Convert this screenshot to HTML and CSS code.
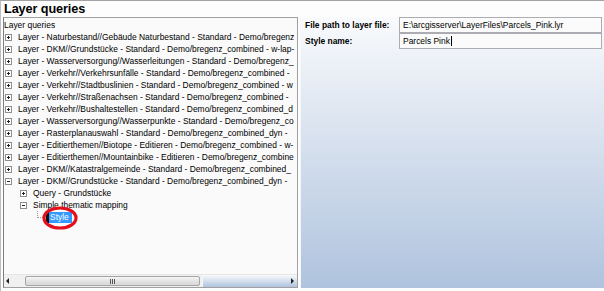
FILE: index.html
```html
<!DOCTYPE html>
<html>
<head>
<meta charset="utf-8">
<link rel="stylesheet" href="styles.css">
</head>
<body>
<div class="app">
  <div class="header">Layer queries</div>
  <div class="main">
    <div class="tree">
      <div class="tree-body">
        <div class="row root">Layer queries</div>
        <div class="row l1"><span class="exp"><svg width="7" height="7" viewBox="0 0 7 7"><rect x="0.5" y="0.5" width="6" height="6" fill="#fff" stroke="#8e8f8f"/><path d="M2 3.5h3M3.5 2v3" stroke="#222" stroke-width="1"/></svg></span><span class="txt">Layer - Naturbestand//Gebäude Naturbestand - Standard - Demo/bregenz</span></div>
        <div class="row l1"><span class="exp"><svg width="7" height="7" viewBox="0 0 7 7"><rect x="0.5" y="0.5" width="6" height="6" fill="#fff" stroke="#8e8f8f"/><path d="M2 3.5h3M3.5 2v3" stroke="#222" stroke-width="1"/></svg></span><span class="txt">Layer - DKM//Grundstücke - Standard - Demo/bregenz_combined - w-lap-</span></div>
        <div class="row l1"><span class="exp"><svg width="7" height="7" viewBox="0 0 7 7"><rect x="0.5" y="0.5" width="6" height="6" fill="#fff" stroke="#8e8f8f"/><path d="M2 3.5h3M3.5 2v3" stroke="#222" stroke-width="1"/></svg></span><span class="txt">Layer - Wasserversorgung//Wasserleitungen - Standard - Demo/bregenz_</span></div>
        <div class="row l1"><span class="exp"><svg width="7" height="7" viewBox="0 0 7 7"><rect x="0.5" y="0.5" width="6" height="6" fill="#fff" stroke="#8e8f8f"/><path d="M2 3.5h3M3.5 2v3" stroke="#222" stroke-width="1"/></svg></span><span class="txt">Layer - Verkehr//Verkehrsunfälle - Standard - Demo/bregenz_combined -</span></div>
        <div class="row l1"><span class="exp"><svg width="7" height="7" viewBox="0 0 7 7"><rect x="0.5" y="0.5" width="6" height="6" fill="#fff" stroke="#8e8f8f"/><path d="M2 3.5h3M3.5 2v3" stroke="#222" stroke-width="1"/></svg></span><span class="txt">Layer - Verkehr//Stadtbuslinien - Standard - Demo/bregenz_combined - w</span></div>
        <div class="row l1"><span class="exp"><svg width="7" height="7" viewBox="0 0 7 7"><rect x="0.5" y="0.5" width="6" height="6" fill="#fff" stroke="#8e8f8f"/><path d="M2 3.5h3M3.5 2v3" stroke="#222" stroke-width="1"/></svg></span><span class="txt">Layer - Verkehr//Straßenachsen - Standard - Demo/bregenz_combined -</span></div>
        <div class="row l1"><span class="exp"><svg width="7" height="7" viewBox="0 0 7 7"><rect x="0.5" y="0.5" width="6" height="6" fill="#fff" stroke="#8e8f8f"/><path d="M2 3.5h3M3.5 2v3" stroke="#222" stroke-width="1"/></svg></span><span class="txt">Layer - Verkehr//Bushaltestellen - Standard - Demo/bregenz_combined_d</span></div>
        <div class="row l1"><span class="exp"><svg width="7" height="7" viewBox="0 0 7 7"><rect x="0.5" y="0.5" width="6" height="6" fill="#fff" stroke="#8e8f8f"/><path d="M2 3.5h3M3.5 2v3" stroke="#222" stroke-width="1"/></svg></span><span class="txt">Layer - Wasserversorgung//Wasserpunkte - Standard - Demo/bregenz_co</span></div>
        <div class="row l1"><span class="exp"><svg width="7" height="7" viewBox="0 0 7 7"><rect x="0.5" y="0.5" width="6" height="6" fill="#fff" stroke="#8e8f8f"/><path d="M2 3.5h3M3.5 2v3" stroke="#222" stroke-width="1"/></svg></span><span class="txt">Layer - Rasterplanauswahl - Standard - Demo/bregenz_combined_dyn -</span></div>
        <div class="row l1"><span class="exp"><svg width="7" height="7" viewBox="0 0 7 7"><rect x="0.5" y="0.5" width="6" height="6" fill="#fff" stroke="#8e8f8f"/><path d="M2 3.5h3M3.5 2v3" stroke="#222" stroke-width="1"/></svg></span><span class="txt">Layer - Editierthemen//Biotope - Editieren - Demo/bregenz_combined - w-</span></div>
        <div class="row l1"><span class="exp"><svg width="7" height="7" viewBox="0 0 7 7"><rect x="0.5" y="0.5" width="6" height="6" fill="#fff" stroke="#8e8f8f"/><path d="M2 3.5h3M3.5 2v3" stroke="#222" stroke-width="1"/></svg></span><span class="txt">Layer - Editierthemen//Mountainbike - Editieren - Demo/bregenz_combine</span></div>
        <div class="row l1"><span class="exp"><svg width="7" height="7" viewBox="0 0 7 7"><rect x="0.5" y="0.5" width="6" height="6" fill="#fff" stroke="#8e8f8f"/><path d="M2 3.5h3M3.5 2v3" stroke="#222" stroke-width="1"/></svg></span><span class="txt">Layer - DKM//Katastralgemeinde - Standard - Demo/bregenz_combined_</span></div>
        <div class="row l1"><span class="exp"><svg width="7" height="7" viewBox="0 0 7 7"><rect x="0.5" y="0.5" width="6" height="6" fill="#fff" stroke="#8e8f8f"/><path d="M2 3.5h3" stroke="#222" stroke-width="1"/></svg></span><span class="txt">Layer - DKM//Grundstücke - Standard - Demo/bregenz_combined_dyn -</span></div>
        <div class="row l2"><span class="exp"><svg width="7" height="7" viewBox="0 0 7 7"><rect x="0.5" y="0.5" width="6" height="6" fill="#fff" stroke="#8e8f8f"/><path d="M2 3.5h3M3.5 2v3" stroke="#222" stroke-width="1"/></svg></span><span class="txt">Query - Grundstücke</span></div>
        <div class="row l2"><span class="exp"><svg width="7" height="7" viewBox="0 0 7 7"><rect x="0.5" y="0.5" width="6" height="6" fill="#fff" stroke="#8e8f8f"/><path d="M2 3.5h3" stroke="#222" stroke-width="1"/></svg></span><span class="txt">Simple thematic mapping</span></div>
        <div class="row l3"><span class="conn"></span><span class="sel">Style</span></div>
      </div>
      <div class="hscroll">
        <div class="sb-btn left"><span class="arr-l"></span></div>
        <div class="track">
          <div class="thumb"><span class="grip"></span><span class="grip"></span><span class="grip"></span></div>
        </div>
        <div class="sb-btn right"><span class="arr-r"></span></div>
      </div>
    </div>
    <div class="right">
      <div class="form">
        <div class="label">File path to layer file:</div>
        <div class="box">E:\arcgisserver\LayerFiles\Parcels_Pink.lyr</div>
        <div class="label">Style name:</div>
        <div class="box">Parcels Pink<span class="caret"></span></div>
      </div>
    </div>
  </div>
  <svg class="mark" width="40" height="26" viewBox="0 0 40 26"><ellipse cx="19" cy="13" rx="16" ry="10" fill="none" stroke="#e3101c" stroke-width="3.2"/></svg>
</div>
</body>
</html>
```

FILE: styles.css
```css
html, body {
  margin: 0;
  padding: 0;
  background: #ffffff;
}
.app {
  position: relative;
  width: 604px;
  height: 291px;
  box-sizing: border-box;
  border-top: 1px solid #a3a3a3;
  border-left: 1px solid #bdbdbd;
  background: #fdfdfd;
  overflow: hidden;
  font-family: "Liberation Sans", Arial, sans-serif;
  color: #000;
}
.header {
  height: 16px;
  line-height: 16px;
  padding-left: 3px;
  font-size: 12.7px;
  font-weight: bold;
  letter-spacing: -0.1px;
}
.main {
  display: flex;
  height: 271px;
  padding-left: 2px;
}
.tree {
  width: 295px;
  box-sizing: border-box;
  border: 1px solid #a0a0a0;
  border-left-color: #7d7d7d;
  background: #fafafa;
  display: flex;
  flex-direction: column;
}
.tree-body {
  flex: 1;
  overflow: hidden;
  font-size: 8.45px;
  padding-top: 1px;
}
.row {
  height: 12px;
  line-height: 12px;
  display: flex;
  align-items: center;
  white-space: nowrap;
  overflow: hidden;
}
.root { padding-left: 0; }
.l1 { padding-left: 1px; }
.l2 { padding-left: 16px; }
.l3 { padding-left: 33px; }
.exp {
  width: 7px;
  height: 7px;
  margin-right: 6px;
  flex: none;
  display: flex;
}
.txt { flex: none; }
.conn {
  width: 5px;
  height: 6px;
  margin-top: -6px;
  margin-right: 3px;
  border-left: 1px dotted #999;
  border-bottom: 1px dotted #999;
  flex: none;
}
.sel {
  background: #3399ff;
  color: #fff;
  border-left: 3px solid #111;
  padding: 0 3px 0 1px;
  line-height: 11px;
  height: 11px;
}
.hscroll {
  height: 12px;
  display: flex;
  background: #f0f0f0;
  border-top: 1px solid #e6e6e6;
}
.sb-btn {
  width: 20px;
  display: flex;
  align-items: center;
}
.sb-btn.left { justify-content: flex-start; padding-left: 2px; width: 19px; }
.sb-btn.right { justify-content: flex-end; padding-right: 3px; width: 14px; }
.arr-l {
  width: 0; height: 0;
  border-top: 3px solid transparent;
  border-bottom: 3px solid transparent;
  border-right: 3px solid #222;
}
.arr-r {
  width: 0; height: 0;
  border-top: 3px solid transparent;
  border-bottom: 3px solid transparent;
  border-left: 3px solid #222;
}
.track {
  flex: 1;
  display: flex;
  align-items: center;
}
.thumb {
  width: 175px;
  height: 10px;
  box-sizing: border-box;
  border: 1px solid #a5a5a5;
  border-radius: 2px;
  background: linear-gradient(#f6f6f6, #e2e2e2 55%, #d8d8d8);
  display: flex;
  justify-content: center;
  align-items: center;
  gap: 1px;
}
.grip {
  width: 1px;
  height: 5px;
  background: #555;
}
.right {
  flex: 1;
  margin-left: 2px;
  border-left: 1px solid #f4f6f9;
  background: linear-gradient(#f9fafc, #afc3de);
  padding: 0 2px 0 4px;
}
.form {
  display: grid;
  grid-template-columns: 94px 1fr;
  grid-auto-rows: 16px;
  font-size: 8.45px;
}
.label {
  font-weight: bold;
  line-height: 16px;
}
.box {
  box-sizing: border-box;
  border: 1px solid #abadb3;
  background: #fbfbfb;
  line-height: 14px;
  padding-left: 3px;
  display: flex;
  align-items: center;
  white-space: nowrap;
}
.caret {
  width: 1px;
  height: 10px;
  background: #000;
  margin-left: 1px;
}
.mark {
  position: absolute;
  left: 40px;
  top: 204px;
}
```
